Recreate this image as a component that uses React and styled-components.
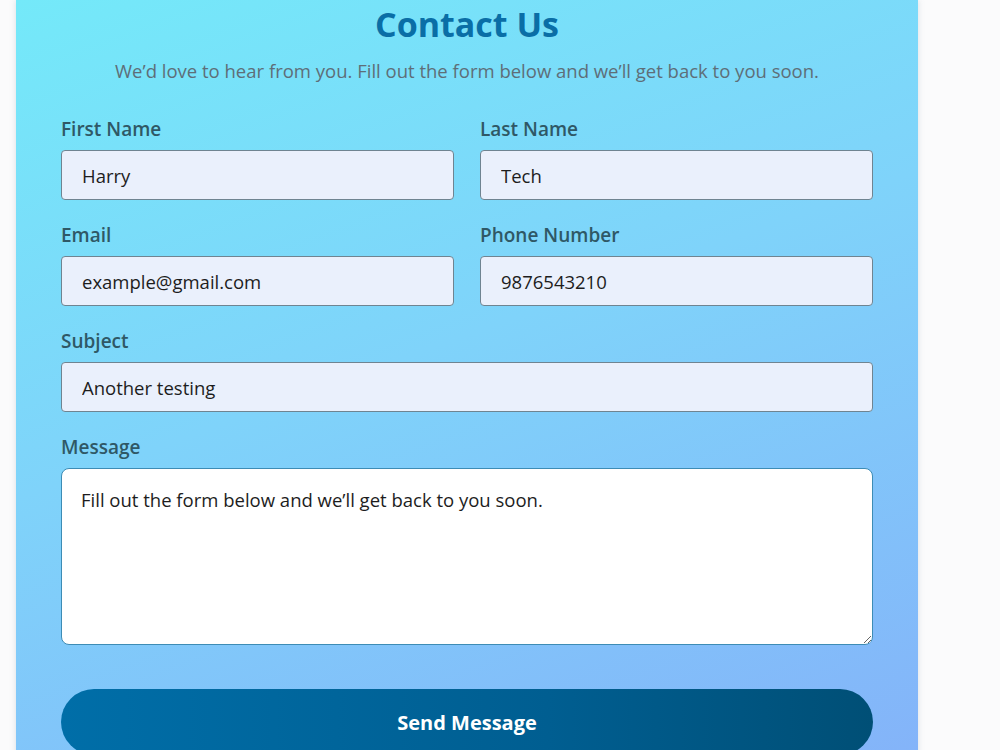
import React, { useState, useRef, useEffect } from "react";
import styled, { createGlobalStyle } from "styled-components";

const GlobalStyle = createGlobalStyle`
  html, body {
    margin: 0;
    padding: 0;
    background: #fbfbfc;
    overflow: hidden;
  }
  * {
    box-sizing: border-box;
  }
`;

const Page = styled.div`
  padding-left: 16px;
  height: 750px;
`;

const Card = styled.form`
  width: 902px;
  min-height: 780px;
  padding: 2px 45px 0;
  background: linear-gradient(160deg, #74e9f9 0%, #7fd3fa 45%, #84b2f9 100%);
  box-shadow: 0 0 6px rgba(120, 140, 160, 0.25);
  font-family: "Open Sans", "Noto Sans", sans-serif;
`;

const Title = styled.h1`
  margin: 0;
  text-align: center;
  font-size: 34px;
  font-weight: 700;
  color: #0a6ea6;
  line-height: 44px;
`;

const Subtitle = styled.p`
  margin: 14px 0 35px;
  text-align: center;
  font-size: 18.5px;
  color: #5e6e78;
  line-height: 22px;
`;

const Row = styled.div`
  display: grid;
  grid-template-columns: ${(p) => (p.$split ? "1fr 1fr" : "1fr")};
  column-gap: 26px;
  margin-bottom: 23px;
`;

const Field = styled.div`
  display: flex;
  flex-direction: column;
`;

const Label = styled.label`
  font-size: 19px;
  font-weight: 600;
  color: #2f5866;
  line-height: 24px;
  margin-bottom: 9px;
`;

const Input = styled.input`
  height: 50px;
  padding: 0 20px;
  border: 1.5px solid #6f8491;
  border-radius: 4px;
  background: #eaf0fc;
  font-family: inherit;
  font-size: 18.5px;
  color: #1d1d1d;
  outline: none;
`;

const TextArea = styled.textarea`
  height: 177px;
  padding: 19px 19px;
  border: 1.5px solid #3d8cb5;
  border-radius: 8px;
  background: #ffffff;
  font-family: inherit;
  font-size: 18.5px;
  line-height: 24px;
  color: #1d1d1d;
  outline: none;
  resize: vertical;
`;

const SendButton = styled.button`
  display: block;
  width: 100%;
  height: 66px;
  margin-top: 44px;
  border: none;
  border-radius: 33px;
  background: linear-gradient(90deg, #006ea8 0%, #005e91 60%, #004f76 100%);
  color: #ffffff;
  font-family: inherit;
  font-size: 20px;
  font-weight: 700;
  cursor: pointer;
`;

export default function App() {
  const [form, setForm] = useState({
    firstName: "Harry",
    lastName: "Tech",
    email: "example@gmail.com",
    phone: "9876543210",
    subject: "Another testing",
    message: "Fill out the form below and we\u2019ll get back to you soon.",
  });
  const messageRef = useRef(null);

  useEffect(() => {
    const el = messageRef.current;
    if (el) {
      el.focus();
      el.setSelectionRange(el.value.length, el.value.length);
    }
  }, []);

  const update = (key) => (e) => setForm({ ...form, [key]: e.target.value });

  return (
    <>
      <GlobalStyle />
      <Page>
        <Card onSubmit={(e) => e.preventDefault()}>
          <Title>Contact Us</Title>
          <Subtitle>
            We&rsquo;d love to hear from you. Fill out the form below and
            we&rsquo;ll get back to you soon.
          </Subtitle>

          <Row $split>
            <Field>
              <Label>First Name</Label>
              <Input value={form.firstName} onChange={update("firstName")} />
            </Field>
            <Field>
              <Label>Last Name</Label>
              <Input value={form.lastName} onChange={update("lastName")} />
            </Field>
          </Row>

          <Row $split>
            <Field>
              <Label>Email</Label>
              <Input type="email" value={form.email} onChange={update("email")} />
            </Field>
            <Field>
              <Label>Phone Number</Label>
              <Input type="tel" value={form.phone} onChange={update("phone")} />
            </Field>
          </Row>

          <Row>
            <Field>
              <Label>Subject</Label>
              <Input value={form.subject} onChange={update("subject")} />
            </Field>
          </Row>

          <Row>
            <Field>
              <Label>Message</Label>
              <TextArea
                ref={messageRef}
                value={form.message}
                onChange={update("message")}
              />
            </Field>
          </Row>

          <SendButton type="submit">Send Message</SendButton>
        </Card>
      </Page>
    </>
  );
}
